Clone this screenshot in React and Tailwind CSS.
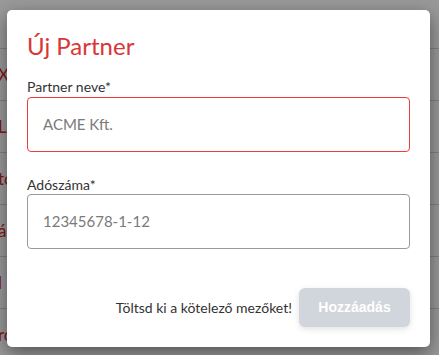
export default function App() {
  const rows = ["", "X", "L", "to", "ál", "l", "ro"];
  return (
    <div className="relative w-[439px] h-[355px] overflow-hidden bg-white font-['Lato',sans-serif]">
      <div className="flex flex-col">
        {rows.map((r, i) => (
          <div
            key={i}
            className={`${i === 0 ? "h-[49px]" : "h-[52px]"} border-b border-gray-300 flex items-center text-[17px] text-[#d42b2b] -ml-[2px]`}
          >
            {r}
          </div>
        ))}
      </div>
      <div className="absolute inset-0 bg-black/40"></div>
      <div className="absolute left-[7px] top-[10px] w-[423px] h-[337px] bg-white rounded-[5px] shadow-[0_6px_18px_rgba(0,0,0,0.45)] flex flex-col px-[20px] pt-[21px] pb-[20px]">
        <h2 className="text-[24px] leading-[30px] text-[#d93636] font-normal">Új Partner</h2>
        <label className="mt-[17px] text-[14px] leading-[18px] text-[#333]">Partner neve*</label>
        <div className="mt-[1px] h-[55px] w-[383px] border border-[#ee3b3b] rounded-[4px] flex items-center px-[15px] text-[15px] text-[#7a7a7a]">
          ACME Kft.
        </div>
        <label className="mt-[24px] text-[14px] leading-[18px] text-[#333]">Adószáma*</label>
        <div className="h-[55px] w-[383px] border border-[#999] rounded-[4px] flex items-center px-[15px] text-[15px] text-[#7a7a7a]">
          12345678-1-12
        </div>
        <div className="mt-auto flex items-center justify-end gap-[7px]">
          <span className="text-[14px] text-[#333]">Töltsd ki a kötelező mezőket!</span>
          <button className="w-[111px] h-[39px] rounded-[6px] bg-[#d1d5dc] text-white font-bold text-[14px] font-['Liberation_Sans',sans-serif] shadow-[0_2px_6px_rgba(0,0,0,0.12)]">
            Hozzáadás
          </button>
        </div>
      </div>
    </div>
  );
}
